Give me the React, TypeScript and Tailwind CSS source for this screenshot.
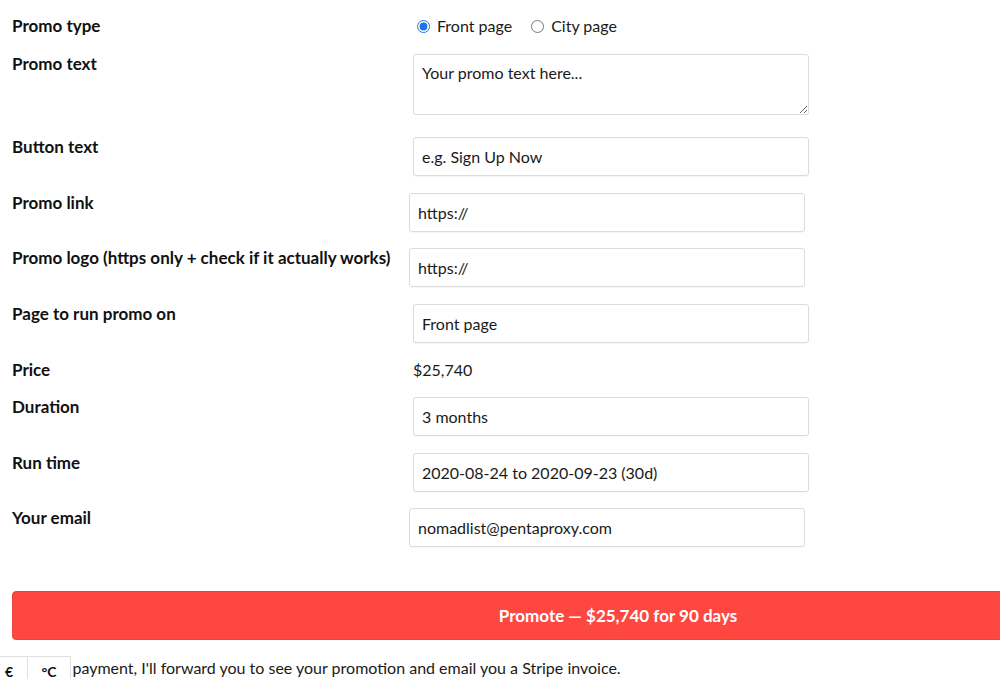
import React from "react";

const font = { fontFamily: "Lato, 'Noto Sans', sans-serif" };

function Row({ label, children, className = "" }: { label: string; children: React.ReactNode; className?: string }) {
  return (
    <div className={`flex items-start ${className}`}>
      <div className="w-[401px] shrink-0 text-[17px] leading-5 font-bold text-[#111]">{label}</div>
      {children}
    </div>
  );
}

function Field({ value, shift = false }: { value: string; shift?: boolean }) {
  return (
    <div
      className={`${shift ? "ml-[-4px]" : ""} w-[396px] h-[39px] border border-[#dcdcdc] rounded-[3px] shadow-[0_1px_1px_rgba(0,0,0,0.04)] bg-white flex items-center pl-[8px] text-[16px] text-[#1a1a1a]`}
    >
      {value}
    </div>
  );
}

export default function App() {
  return (
    <div style={font} className="relative w-[1000px] h-[679px] overflow-hidden bg-white">
      <div className="pl-[12px] pt-[16px] flex flex-col">
        <Row label="Promo type">
          <div className="flex items-center text-[16px] leading-5 text-[#1a1a1a] pl-[4px]">
            <input type="radio" name="pt" defaultChecked className="m-0 w-[13px] h-[13px] accent-[#1a73e8]" />
            <span className="ml-[7px]">Front page</span>
            <input type="radio" name="pt" className="m-0 ml-[19px] w-[13px] h-[13px]" />
            <span className="ml-[7px]">City page</span>
          </div>
        </Row>
        <Row label="Promo text" className="mt-[18px]">
          <textarea
            defaultValue="Your promo text here..."
            className="w-[396px] h-[61px] border border-[#dcdcdc] rounded-[3px] bg-white pl-[8px] pt-[8px] text-[16px] leading-5 text-[#1a1a1a] outline-none"
          />
        </Row>
        <Row label="Button text" className="mt-[22px]">
          <Field value="e.g. Sign Up Now" />
        </Row>
        <Row label="Promo link" className="mt-[17px]">
          <Field value="https://" shift />
        </Row>
        <Row label="Promo logo (https only + check if it actually works)" className="mt-[16px]">
          <Field value="https://" shift />
        </Row>
        <Row label="Page to run promo on" className="mt-[17px]">
          <Field value="Front page" />
        </Row>
        <Row label="Price" className="mt-[17px]">
          <div className="text-[16px] leading-5 text-[#1a1a1a]">$25,740</div>
        </Row>
        <Row label="Duration" className="mt-[17px]">
          <Field value="3 months" />
        </Row>
        <Row label="Run time" className="mt-[17px]">
          <Field value="2020-08-24 to 2020-09-23 (30d)" />
        </Row>
        <Row label="Your email" className="mt-[16px]">
          <Field value="nomadlist@pentaproxy.com" shift />
        </Row>
        <button className="mt-[44px] w-[1212px] h-[49px] shrink-0 rounded-[4px] bg-[#ff4742] border border-[#e8433e] text-white font-bold text-[17px] flex items-center justify-center">
          Promote — $25,740 for 90 days
        </button>
        <p className="mt-[18px] text-[16px] leading-5 text-[#1a1a1a] pl-[21px]">
          After payment, I'll forward you to see your promotion and email you a Stripe invoice.
        </p>
      </div>
      <div className="absolute left-0 top-[656px] flex">
        <div className="w-[28px] h-[30px] bg-white border border-[#e0e0e0] border-l-0 flex items-center justify-end pr-[14px] text-[14px] font-bold text-[#111]">
          €
        </div>
        <div className="w-[43px] h-[30px] bg-white border border-[#e0e0e0] border-l-0 flex items-center justify-center text-[14px] font-bold text-[#111]">
          °C
        </div>
      </div>
    </div>
  );
}
